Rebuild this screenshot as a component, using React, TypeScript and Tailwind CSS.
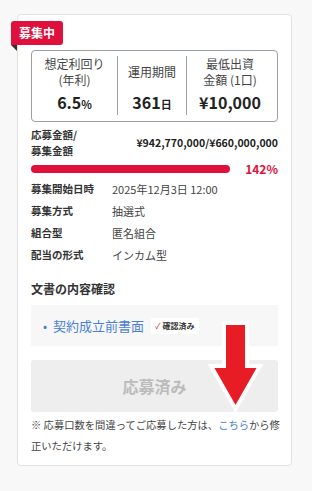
const jp = { fontFamily: '"Noto Sans CJK JP", "Noto Sans", sans-serif' };

const rows = [
  { label: "募集開始日時", value: "2025年12月3日 12:00" },
  { label: "募集方式", value: "抽選式" },
  { label: "組合型", value: "匿名組合" },
  { label: "配当の形式", value: "インカム型" },
];

export default function App() {
  return (
    <div className="min-h-[491px] w-[312px] bg-[#f8f8f8] pt-[14px] pl-[17px]" style={jp}>
      <div className="relative w-[275px] rounded border border-[#e2e2e2] bg-white px-[13px] pt-[35px] pb-[9px]">
        {/* badge */}
        <div className="absolute -left-[7px] top-[6px]">
          <div className="flex h-[24px] w-[52px] items-center justify-center rounded-[3px] rounded-bl-none bg-[#e0103c] text-[12px] font-bold text-white">
            募集中
          </div>
          <div className="h-0 w-0 border-t-[6px] border-l-[6px] border-t-[#333] border-l-transparent" />
        </div>

        {/* stats */}
        <div className="grid grid-cols-[85px_69px_1fr] rounded border border-[#9aa0a8] pt-[5px] pb-[6px]">
          <div className="flex flex-col items-center">
            <div className="text-center text-[12px] leading-[16px] text-[#444]">
              想定利回り
              <br />
              (年利)
            </div>
            <div className="mt-[3px] text-[16px] font-bold leading-[22px] text-[#222]">
              6.5<span className="text-[11px]">%</span>
            </div>
          </div>
          <div className="flex flex-col items-center border-l border-[#9aa0a8]">
            <div className="flex h-[32px] items-center text-[12px] text-[#444]">運用期間</div>
            <div className="mt-[3px] text-[16px] font-bold leading-[22px] text-[#222]">
              361<span className="text-[11px]">日</span>
            </div>
          </div>
          <div className="flex flex-col items-center border-l border-[#9aa0a8] pr-[4px]">
            <div className="text-center text-[12px] leading-[16px] text-[#444]">
              最低出資
              <br />
              金額 (1口)
            </div>
            <div className="mt-[3px] text-[16px] font-bold leading-[22px] text-[#222]">¥10,000</div>
          </div>
        </div>

        {/* amount */}
        <div className="mt-[5px] flex items-center justify-between">
          <div className="text-[10.5px] font-bold leading-[16px] text-[#333]">
            応募金額/
            <br />
            募集金額
          </div>
          <div className="text-[10.5px] font-bold text-[#222]">¥942,770,000/¥660,000,000</div>
        </div>
        <div className="mt-[1px] flex h-[17px] items-center justify-between">
          <div className="h-[8px] w-[199px] rounded-full bg-[#e0103c]" />
          <div className="text-[12px] font-bold text-[#e0103c]">142%</div>
        </div>

        {/* details */}
        <div className="mt-[1px] flex flex-col">
          {rows.map((r) => (
            <div key={r.label} className="flex h-[22px] items-center text-[11px]">
              <div className="w-[81px] text-[10.5px] font-bold text-[#333]">{r.label}</div>
              <div className="text-[#444]">{r.value}</div>
            </div>
          ))}
        </div>

        {/* documents */}
        <div className="mt-[14px] text-[12px] font-bold leading-[17px] text-[#333]">文書の内容確認</div>
        <div className="mt-[8px] flex h-[41px] items-center bg-[#f7f7f7] pl-[12px]">
          <span className="text-[12px] text-[#4a7fd6]">•</span>
          <span className="ml-[6px] text-[13px] text-[#4a7fd6]">契約成立前書面</span>
          <span className="ml-[7px] flex items-center gap-[2px] bg-white px-[4px] py-[2px] text-[8px] font-bold text-[#333]">
            <span className="font-normal text-[#d0103c]">✓</span>確認済み
          </span>
        </div>

        {/* button */}
        <div className="mt-[14px] flex h-[52px] items-center justify-center rounded-[3px] bg-[#eeeeee] text-[16px] font-bold text-[#bbbbbb]">
          応募済み
        </div>

        <p className="-mr-[8px] mt-[2px] text-[10.3px] leading-[21px] text-[#444]">
          ※ 応募口数を間違ってご応募した方は、<span className="text-[#4a7fd6]">こちら</span>から修
          <br />
          正いただけます。
        </p>

        {/* overlay arrow */}
        <svg className="pointer-events-none absolute left-[188px] top-[304px]" width="60" height="110" viewBox="0 0 60 110">
          <polygon
            points="18,4 41,4 41,47 54,47 29.5,90 5,47 18,47"
            fill="#e81c24"
            stroke="#ffffff"
            strokeWidth="4"
            strokeLinejoin="miter"
          />
        </svg>
      </div>
    </div>
  );
}
